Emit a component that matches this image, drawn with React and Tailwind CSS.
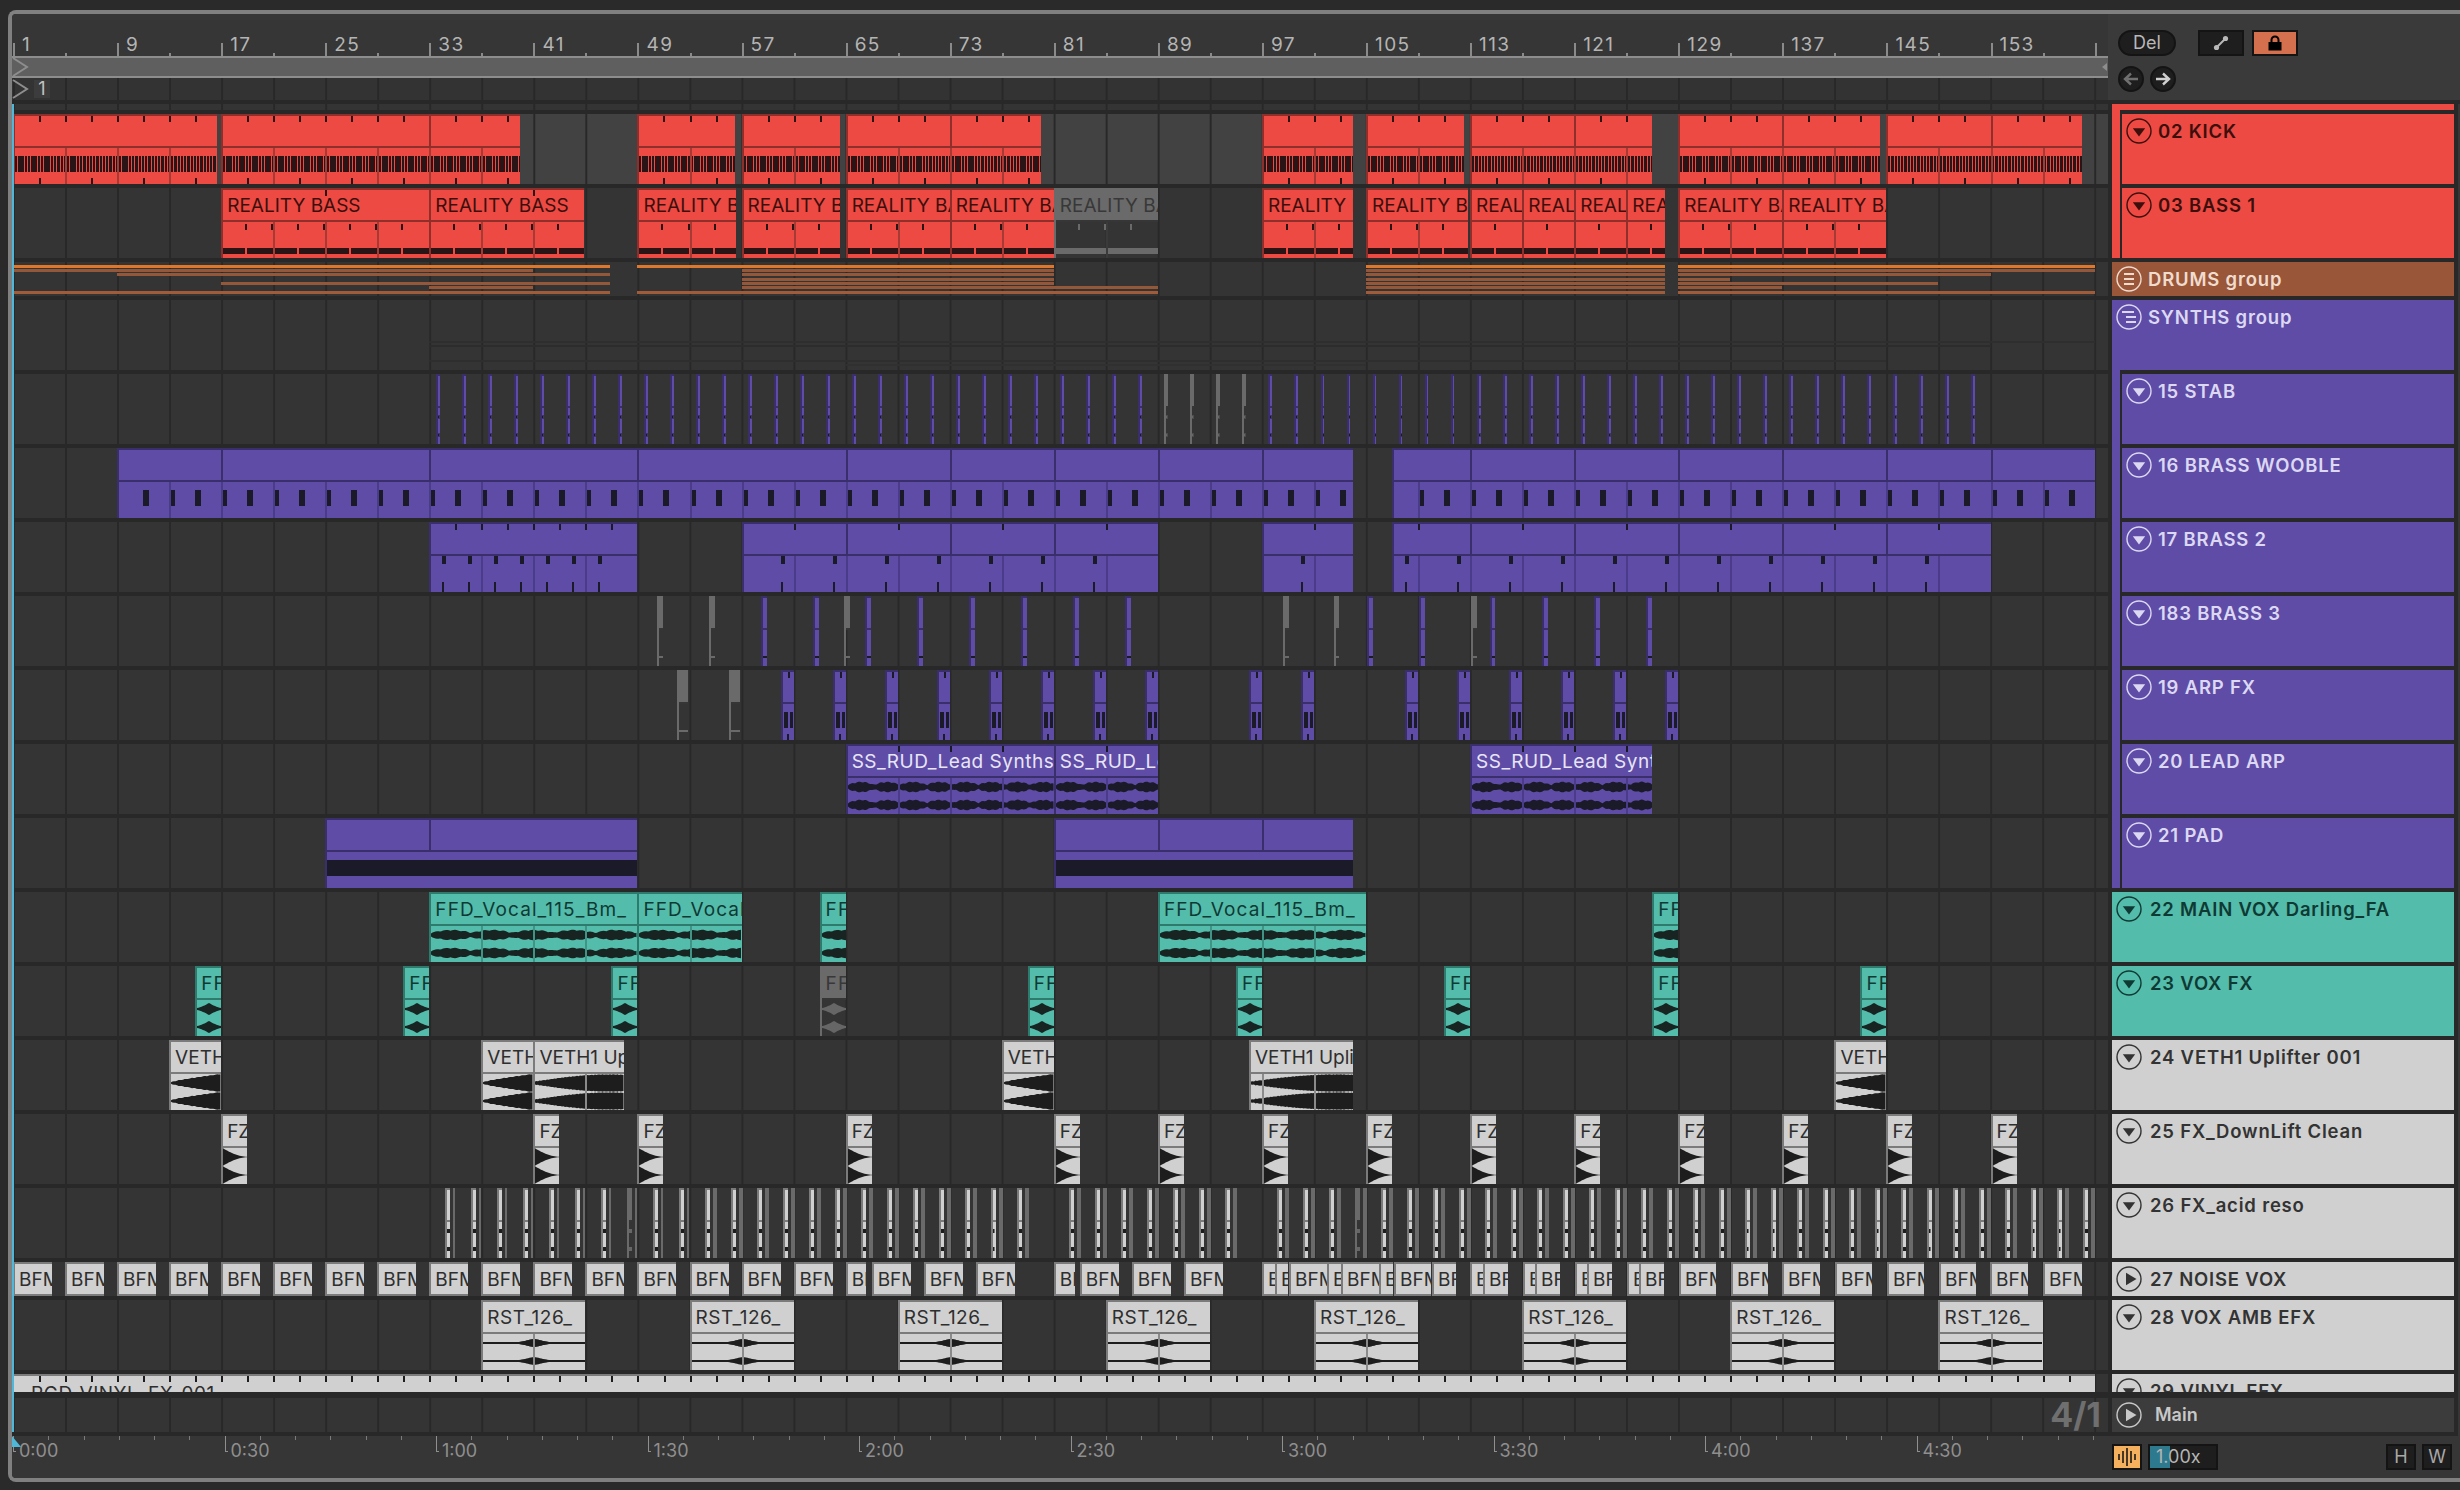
import React from "react";

const BAR = 13.01;
const barX = (b) => 1 + (b - 1) * BAR; // x inside the arrangement panel
const xBar = (x) => (x - 13) / BAR + 1; // screen x to bar

const themes = {
  red: { bg: "bg-[#ec4a42]", line: "bg-[#8e2f2b]", edge: "border-[#8e2f2b]", text: "text-[#3c0f0d]", wave: "#2a1416", tick: "bg-[#2a1416]", soft: "bg-[#a63a35]" },
  purple: { bg: "bg-[#5e4ca6]", line: "bg-[#3a2f6b]", edge: "border-[#3a2f6b]", text: "text-[#e8e5f7]", wave: "#1b1a28", tick: "bg-[#1b1a28]", soft: "bg-[#4a3c88]" },
  teal: { bg: "bg-[#54bcab]", line: "bg-[#2e7a6c]", edge: "border-[#2e7a6c]", text: "text-[#0f3a34]", wave: "#172422", tick: "bg-[#172422]", soft: "bg-[#3f9486]" },
  light: { bg: "bg-[#d0d0d0]", line: "bg-[#7b7b7b]", edge: "border-[#7b7b7b]", text: "text-[#2e2e2e]", wave: "#1d1d1d", tick: "bg-[#1d1d1d]", soft: "bg-[#8a8a8a]" },
  grey: { bg: "bg-[#6a6a6a]", line: "bg-[#363636]", edge: "border-[#6a6a6a]", text: "text-[#383838]", wave: "#666666", tick: "bg-[#6a6a6a]", soft: "bg-[#3a3a3a]" },
};

// Envelope of each kind of audio clip, x in px, w = clip width
const shapes = {
  vocal: (x) => 1.6 + 2.6 * Math.abs(Math.sin(x / 13)) + 1.1 * Math.abs(Math.sin(x / 3.1)),
  lead: (x) => 1.4 + 2.8 * Math.abs(Math.sin(x / 8.3)) + 1.2 * Math.abs(Math.sin(x / 2.3)),
  fx: (x, w) => 1 + 5 * Math.pow(1 - Math.abs((2 * x) / w - 1), 1.4),
  rise: (x, w) => 0.8 + 8.2 * Math.pow(x / w, 0.8) + 0.3 * Math.sin(x),
  riseLong: (x, w) => 1.5 + 7 * Math.sin(Math.min(1, x / w) * 1.9) + 0.3 * Math.sin(x * 1.7),
  fall: (x, w) => 8.5 * Math.pow(1 - x / w, 1.8) + 0.3,
  rst: (x, w) => 0.9 + 3 * Math.exp(-Math.pow((x - w / 2) / 9, 2)),
  rst2: (x, w) => 0.9 + 1.2 * Math.exp(-Math.pow((x - w / 2) / 10, 2)),
  thin: (x) => 1.2 + Math.abs(Math.sin(x)) * 0.8,
  acid: () => 2,
};

function Wave({ w, shape, shape2, color }) {
  const channel = (cy, fn) => {
    const pts = [];
    for (let x = 0; x <= w; x += 1.5) pts.push([x, fn(x, w)]);
    const top = pts.map(([x, a]) => `${x},${cy - a}`);
    const bottom = pts.reverse().map(([x, a]) => `${x},${cy + a}`);
    return [...top, ...bottom].join(" ");
  };
  return (
    <svg className="absolute left-0 top-0" width={w} height={36}>
      <polygon points={channel(9, shapes[shape])} fill={color} />
      <polygon points={channel(27, shapes[shape2 || shape])} fill={color} />
    </svg>
  );
}

function Ticks({ start, end, from, every, y, h, w = 2, cls, shift = 0 }) {
  const out = [];
  const offset = barX(start);
  for (let b = from; b < end; b += every) {
    if (b <= start) continue;
    out.push(
      <div
        key={b}
        className={`absolute ${cls}`}
        style={{ left: barX(b) - offset - 2 + shift, top: y, height: h, width: w }}
      />
    );
  }
  return out;
}

// Header lines are sparse in the first half of the song, then every 8 bars
const headerLine = (b) => (b < 65 ? (b - 1) % 16 === 0 : (b - 1) % 8 === 0);

function Clip({ s, e, t = "red", label, wave, n = 2, compact }) {
  const th = themes[t];
  const width = barX(e) - barX(s);
  const inner = width - 2;
  const isGrey = t === "grey";
  const tracking = label?.startsWith("FFD") ? "tracking-[1.1px]" : label?.includes("_") ? "tracking-[0.5px]" : "";
  return (
    <div
      className={`absolute top-0 h-full flex flex-col overflow-hidden border-l-2 border-t-2 ${th.edge} ${compact ? "border-b-2" : ""}`}
      style={{ left: barX(s), width }}
    >
      <div className={`relative flex items-center pl-[4px] whitespace-nowrap text-[19px] leading-none ${tracking} ${th.bg} ${th.text} ${compact ? "flex-1" : "h-[30px] pt-[1px]"}`}>
        {label}
        {wave === "kick" && <Ticks start={s} end={e} from={1} every={2} y={0} h={6} cls={th.tick} />}
        {wave === "bass" && <Ticks start={s} end={e} from={9} every={16} y={0} h={6} cls={th.tick} />}
        {wave === "brass2" && <Ticks start={s} end={e} from={1} every={n} y={0} h={6} cls={th.tick} />}
        {wave === "arp" && <div className={`absolute left-[5px] top-0 w-[2px] h-[6px] ${th.tick}`} />}
        {wave === "lead" && <Ticks start={s} end={e} from={1} every={4} y={0} h={6} cls={th.tick} />}
      </div>
      {!compact && <div className={`h-[2px] shrink-0 ${th.line}`} />}
      {!compact && (
        <div className={`relative flex-1 ${isGrey ? "" : th.bg}`}>
          {wave === "kick" && (
            <>
              <div className="absolute inset-x-0 top-[8px] h-[16px] bg-[repeating-linear-gradient(90deg,#2a1416_0_2.4px,#ec4a42_2.4px_3.25px)]" />
              <Ticks start={s} end={e} from={1} every={2} y={30} h={6} cls={th.tick} />
            </>
          )}
          {wave === "bass" && (
            <>
              <Ticks start={s} end={e} from={1} every={2} y={2} h={6} cls={isGrey ? "bg-[#6a6a6a]" : th.tick} shift={-2} />
              <div className={`absolute inset-x-0 top-[26px] h-[6px] ${isGrey ? "bg-[repeating-linear-gradient(90deg,#6a6a6a_0_50px,#363636_50px_52px)]" : "bg-[repeating-linear-gradient(90deg,#2a1416_0_22px,#ec4a42_22px_24px,#2a1416_24px_50px,#ec4a42_50px_52px)]"}`} />
            </>
          )}
          {wave === "brass" && <Ticks start={s} end={e} from={1} every={2} y={8} h={16} w={6} cls={th.tick} />}
          {wave === "brass2" && (
            <>
              <Ticks start={s} end={e} from={1} every={n} y={0} h={8} w={4} cls={th.tick} shift={-13} />
              <Ticks start={s} end={e} from={1} every={n} y={26} h={10} w={2} cls={th.tick} shift={-13} />
            </>
          )}
          {wave === "pad" && <div className={`absolute inset-x-0 top-[8px] h-[16px] ${th.tick}`} />}
          {wave === "mark" && <div className={`absolute inset-x-0 top-[26px] h-[2px] ${th.tick}`} />}
          {wave === "arp" && (
            <>
              <div className={`absolute left-[1px] right-[1px] top-[8px] h-[16px] ${th.tick}`} />
              <div className={`absolute left-[5px] top-[8px] h-[16px] w-[2px] ${th.bg}`} />
              <div className={`absolute left-[4px] top-[30px] h-[6px] w-[2px] ${th.tick}`} />
            </>
          )}
          {shapes[wave] && <Wave w={inner} shape={wave} color={th.wave} />}
          {wave === "rst" && <Wave w={inner} shape="rst" shape2="rst2" color={th.wave} />}
          {width > 40 && wave !== "pad" &&
            Array.from({ length: 41 }, (_, k) => 1 + k * 4)
              .filter((b) => b > s && b < e)
              .map((b) => (
                <div key={b} className={`absolute top-0 bottom-0 w-[2px] ${th.soft}`} style={{ left: barX(b) - barX(s) - 2 }} />
              ))}
        </div>
      )}
      {width > 40 && !compact &&
        Array.from({ length: 21 }, (_, k) => 1 + k * 8)
          .filter((b) => b > s && b < e && headerLine(b) && (t === "purple" || t === "red") && wave !== "bass" && wave !== "lead")
          .map((b) => (
            <div key={b} className={`absolute top-0 h-[30px] w-[2px] ${th.line}`} style={{ left: barX(b) - barX(s) - 2 }} />
          ))}
    </div>
  );
}

const R = "REALITY BASS";
const kick = [[1, 16.7], [17, 40], [49, 56.5], [57, 64.6], [65, 80], [97, 104], [105, 112.5], [113, 127], [129, 144.5], [145, 160]];
const bass = [[17, 33], [33, 44.9], [49, 56.6], [57, 64.6], [65, 73], [73, 81], [97, 104], [105, 112.8], [113, 117], [117, 121], [121, 125], [125, 128], [129, 137], [137, 145]];

const drumLines = [
  [3, "bg-[#dc772e]", [[1, 46.9], [49, 81], [105, 128], [129, 161]]],
  [7, "bg-[#95573a]", [[1, 41], [57, 81], [105, 128], [129, 161]]],
  [11, "bg-[#95573a]", [[9, 46.9], [57, 81], [105, 128], [129, 153]]],
  [16, "bg-[#95573a]", [[57, 81], [105, 128], [129, 133]]],
  [20, "bg-[#95573a]", [[17, 46.9], [57, 81], [105, 128], [129, 149]]],
  [24, "bg-[#95573a]", [[33, 41], [57, 89], [105, 128], [129, 137]]],
  [29, "bg-[#a05c38]", [[1, 46.9], [49, 89], [105, 128], [129, 161]]],
];

const synthLines = [
  [41, "bg-[#2e2e2e]", [[33, 161]]],
  [45, "bg-[#2c2c2c]", [[33, 153]]],
  [60, "bg-[#2e2e2e]", [[33, 145]]],
  [64, "bg-[#303030]", [[65, 105]]],
];

function Lines({ lines, h = "h-[2px]" }) {
  return lines.flatMap(([y, cls, spans]) =>
    spans.map(([s, e]) => (
      <div key={`${y}-${s}`} className={`absolute ${h} ${cls}`} style={{ top: y, left: barX(s), width: barX(e) - barX(s) }} />
    ))
  );
}

const range = (from, count, step) => Array.from({ length: count }, (_, k) => from + k * step);

const brass3Purple = [...range(58.5, 8, 4), 105.1, 109.1, ...range(114.5, 4, 4)];
const brass3Grey = [50.5, 54.5, 64.9, 98.6, 102.5, 113.1];
const arpPurple = [...range(60, 8, 4), 96, 100, ...range(108, 6, 4)];
const voxFx = [15, 31, 47, 79, 95, 111, 127, 143];
const fz = [17, 41, 49, 65, 81, 89, 97, 105, 113, 121, 129, 137, 145, 153];
const rst = [37, 53, 69, 85, 101, 117, 133, 149];

const bfmBars = [
  ...range(1, 16, 4).map((b) => [b, b + 3]),
  [65, 66.6], [67, 70], [71, 74], [75, 78], [81, 82.6], [83, 86], [87, 90], [91, 94],
];
// the busy end of the noise track is irregular, so read off as screen x
const bfmX = [
  [1262, 1275], [1275, 1288], [1289, 1327], [1327, 1341], [1341, 1379], [1379, 1393], [1394, 1431], [1432, 1456],
  [1470, 1483], [1483, 1508], [1523, 1535], [1535, 1560], [1575, 1587], [1587, 1612], [1627, 1639], [1639, 1664],
  [1679, 1716], [1731, 1768], [1782, 1820], [1835, 1872], [1887, 1924], [1939, 1976], [1990, 2028], [2043, 2082],
];
// short slices only have room for the start of the name
const bfmLabel = (px) => (px < 20 ? "B" : px < 32 ? "BF" : "BFM");

const acid = range(445, 65, 26).filter((x) => !(x > 1028 && x < 1067) && !(x > 1232 && x < 1274));

function Chevron({ className }) {
  return (
    <svg className={className} width="18" height="20" viewBox="0 0 18 20" fill="none">
      <path d="M1 1 L15 10 L1 19" stroke="#8d8d8d" strokeWidth="2" />
    </svg>
  );
}

function CircleIcon({ kind = "down" }) {
  return (
    <svg width="26" height="26" viewBox="0 0 26 26" fill="none" className="shrink-0" stroke="currentColor">
      <circle cx="13" cy="13" r="12" strokeWidth="1.4" />
      {kind === "down" && <path d="M6.8 10.2 H19.2 L13 18.5 Z" fill="currentColor" stroke="none" />}
      {kind === "right" && <path d="M10 6.8 L20.5 13 L10 19.2 Z" fill="currentColor" stroke="none" />}
      {kind === "group" && <path d="M8 8 H18 M8 13 H18 M8 18 H18" strokeWidth="2" />}
      {kind === "steps" && <path d="M6 8 H18 M10 13 H20 M10 18 H20" strokeWidth="2" />}
    </svg>
  );
}

const heads = {
  red: { bg: "bg-[#ec4a42]", text: "text-[#3c0f0d]" },
  brown: { bg: "bg-[#9a5638]", text: "text-[#efdccf]" },
  purple: { bg: "bg-[#5e4ca6]", text: "text-[#dcd8f2]" },
  teal: { bg: "bg-[#54bcab]", text: "text-[#0f3a34]" },
  light: { bg: "bg-[#d0d0d0]", text: "text-[#333333]" },
};

function Head({ tone, name, icon = "down", h = "h-[70px]", textGap = "ml-[8px]" }) {
  const c = heads[tone];
  return (
    <div className={`${h} w-full overflow-hidden ${c.bg} ${c.text}`}>
      <div className="flex items-center h-[34px] shrink-0 pl-[4px] text-[18.5px] font-semibold leading-none tracking-[0.8px] whitespace-nowrap">
        <CircleIcon kind={icon} />
        <span className={textGap}>{name}</span>
      </div>
    </div>
  );
}

function Nested({ tone, name, last }) {
  const c = heads[tone];
  return (
    <div className="flex h-full w-[342px]">
      <div className={`w-[8px] ${c.bg} ${last ? "h-[70px]" : "h-full"}`} />
      <div className="w-[2px]" />
      <div className="w-[332px]">
        <Head tone={tone} name={name} textGap="ml-[6px]" />
      </div>
    </div>
  );
}

function Row({ row = "h-[74px]", cell = "h-[70px]", bg = "bg-[#343434]", head, children }) {
  return (
    <div className={`flex ${row}`}>
      <div className={`relative w-[2096px] overflow-hidden ${cell} ${bg} bg-[linear-gradient(90deg,transparent_1px,#282828_1px,#282828_3px,transparent_3px)] bg-size-[52.04px_100%]`}>
        {children}
      </div>
      <div className="ml-[4px] w-[342px] h-full">{head}</div>
      <div className="ml-[4px] flex-1 bg-[#363636]" />
    </div>
  );
}

const rulerBars = range(1, 20, 8);
const times = ["0:00", "0:30", "1:00", "1:30", "2:00", "2:30", "3:00", "3:30", "4:00", "4:30"];

function TopRuler() {
  return (
    <div className="relative h-[42px] text-[19px] leading-none tracking-[1.4px] text-[#b4b4b4]">
      {range(1, 41, 4).map((b) => (
        <div
          key={b}
          className={`absolute bottom-0 w-[2px] bg-[#8a8a8a] ${(b - 1) % 8 === 0 ? "h-[13px]" : "h-[3px]"}`}
          style={{ left: barX(b) }}
        />
      ))}
      {rulerBars.map((b) => (
        <span key={b} className="absolute top-[21px]" style={{ left: barX(b) + 9 }}>
          {b}
        </span>
      ))}
    </div>
  );
}

function TimeRuler() {
  return (
    <div className="relative w-[2096px] h-full text-[18px] leading-none text-[#8f8f8f]">
      {range(0, 60, 35.25).map((x, i) =>
        i % 6 === 0 ? null : <div key={i} className="absolute top-0 w-px h-[4px] bg-[#7b7b7b]" style={{ left: x + 1 }} />
      )}
      {times.map((t, i) => (
        <div key={t} className="absolute top-0" style={{ left: i * 211.5 + 1 }}>
          <div className="w-[3px] h-[16px] border-l border-b border-[#8f8f8f]" />
          <span className="absolute left-[6px] top-[6px]">{t}</span>
        </div>
      ))}
      <svg className="absolute left-0 top-0" width="10" height="12">
        <path d="M0 0 L9 11 H0 Z" fill="#4fb8d8" />
      </svg>
    </div>
  );
}

export default function App() {
  return (
    <div className="w-[2460px] h-[1490px] pt-[10px] pl-[8px] bg-[#2a2a2a] overflow-hidden font-['Inter',sans-serif]">
      <div className="w-[2452px] h-[1472px] border-4 border-r-0 border-[#808080] rounded-l-[8px] bg-[#282828] flex flex-col overflow-hidden">
        {/* Ruler and scrub area */}
        <div className="flex h-[86px] mb-[4px] bg-[#363636]">
          <div className="w-[2096px]">
            <TopRuler />
            <div className="relative h-[22px] bg-[#5f5f5f] border-y-2 border-[#8d8d8d]">
              <Chevron className="absolute left-0 top-[-1px]" />
              <div className="absolute right-[1px] top-[5px] w-0 h-0 border-y-[4px] border-y-transparent border-r-[5px] border-r-[#8d8d8d]" />
            </div>
            <div className="relative h-[22px] bg-[#333333] bg-[linear-gradient(90deg,transparent_1px,#282828_1px,#282828_3px,transparent_3px)] bg-size-[52.04px_100%]">
              <Chevron className="absolute left-0 top-[1px]" />
              <span className="absolute left-[22px] top-[2px] h-[18px] w-[16px] bg-[#3c3c3c] text-center text-[18px] leading-[18px] text-[#c4c4c4]">1</span>
            </div>
          </div>
          <div className="flex-1 bg-[#3a3a3a] pl-[10px] pt-[16px]">
            <div className="flex items-center">
              <div className="flex items-center justify-center w-[58px] h-[26px] rounded-full bg-[#1e1e1e] border-2 border-[#141414] text-[18px] leading-none text-[#b8b8b8]">Del</div>
              <div className="ml-[22px] flex items-center justify-center w-[46px] h-[26px] bg-[#1e1e1e] border-2 border-[#141414]">
                <svg width="16" height="16" viewBox="0 0 16 16">
                  <path d="M3.5 12.5 L12.5 3.5" stroke="#b8b8b8" strokeWidth="2" />
                  <circle cx="3.5" cy="12.5" r="2.6" fill="#b8b8b8" />
                  <circle cx="12.5" cy="3.5" r="2.6" fill="#b8b8b8" />
                </svg>
              </div>
              <div className="ml-[8px] flex items-center justify-center w-[46px] h-[26px] bg-[#d4704e] border-2 border-[#141414]">
                <svg width="16" height="16" viewBox="0 0 16 16">
                  <path d="M4.5 7 V5 A3.5 3.5 0 0 1 11.5 5 V7" fill="none" stroke="#000" strokeWidth="2" />
                  <rect x="1.5" y="7" width="13" height="8.5" fill="#000" />
                </svg>
              </div>
            </div>
            <div className="flex gap-[6px] mt-[10px]">
              <div className="flex items-center justify-center w-[26px] h-[26px] rounded-full bg-[#1e1e1e] border-2 border-[#141414]">
                <svg width="16" height="14" viewBox="0 0 16 14">
                  <path d="M15 7 H4 M8 1.5 L2 7 L8 12.5" fill="none" stroke="#707070" strokeWidth="2.4" />
                </svg>
              </div>
              <div className="flex items-center justify-center w-[26px] h-[26px] rounded-full bg-[#1e1e1e] border-2 border-[#141414]">
                <svg width="16" height="14" viewBox="0 0 16 14">
                  <path d="M1 7 H12 M8 1.5 L14 7 L8 12.5" fill="none" stroke="#d0d0d0" strokeWidth="2.4" />
                </svg>
              </div>
            </div>
          </div>
        </div>

        {/* Tracks */}
        <div className="relative">
          <div className="absolute left-0 top-0 bottom-[4px] w-[2px] bg-[#4fb8d8] z-10" />

          <Row
            row="h-[10px]"
            cell="h-[6px]"
            head={
              <div>
                <div className="h-[6px] bg-[#ec4a42]" />
                <div className="h-[4px] w-[8px] bg-[#ec4a42]" />
              </div>
            }
          />
          <Row bg="bg-[#424242]" head={<Nested tone="red" name="02 KICK" />}>
            {kick.map(([s, e]) => <Clip key={s} s={s} e={e} wave="kick" />)}
          </Row>
          <Row head={<Nested tone="red" name="03 BASS 1" last />}>
            {bass.map(([s, e]) => <Clip key={s} s={s} e={e} wave="bass" label={R} />)}
            <Clip s={81} e={89} t="grey" wave="bass" label={R} />
          </Row>
          <Row row="h-[38px]" cell="h-[34px]" head={<Head tone="brown" name="DRUMS group" icon="group" h="h-[34px]" textGap="ml-[6px]" />}>
            <Lines lines={drumLines} h="h-[3px]" />
          </Row>
          <Row
            head={
              <div className="h-full">
                <Head tone="purple" name="SYNTHS group" icon="steps" textGap="ml-[6px]" />
                <div className="h-[4px] w-[8px] bg-[#5e4ca6]" />
              </div>
            }
          >
            <Lines lines={synthLines} />
          </Row>
          <Row head={<Nested tone="purple" name="15 STAB" />}>
            {range(33.5, 60, 2).map((b) => (
              <Clip key={b} s={b} e={b + 0.3} t={b > 89 && b < 96 ? "grey" : "purple"} wave="thin" />
            ))}
          </Row>
          <Row head={<Nested tone="purple" name="16 BRASS WOOBLE" />}>
            <Clip s={9} e={104} t="purple" wave="brass" />
            <Clip s={107} e={161} t="purple" wave="brass" />
          </Row>
          <Row head={<Nested tone="purple" name="17 BRASS 2" />}>
            <Clip s={33} e={49} t="purple" wave="brass2" n={2} />
            <Clip s={57} e={89} t="purple" wave="brass2" n={4} />
            <Clip s={97} e={104} t="purple" wave="brass2" n={4} />
            <Clip s={107} e={153} t="purple" wave="brass2" n={4} />
          </Row>
          <Row head={<Nested tone="purple" name="183 BRASS 3" />}>
            {brass3Purple.map((b) => <Clip key={b} s={b} e={b + 0.45} t="purple" wave="mark" />)}
            {brass3Grey.map((b) => <Clip key={b} s={b} e={b + 0.45} t="grey" wave="mark" />)}
          </Row>
          <Row head={<Nested tone="purple" name="19 ARP FX" />}>
            {arpPurple.map((b) => <Clip key={b} s={b} e={b + 1} t="purple" wave="arp" />)}
            {[52, 56].map((b) => <Clip key={b} s={b} e={b + 0.9} t="grey" wave="mark" />)}
          </Row>
          <Row head={<Nested tone="purple" name="20 LEAD ARP" />}>
            <Clip s={65} e={81} t="purple" label="SS_RUD_Lead Synths" wave="lead" />
            <Clip s={81} e={89} t="purple" label="SS_RUD_Lead Synths" wave="lead" />
            <Clip s={113} e={127} t="purple" label="SS_RUD_Lead Synths" wave="lead" />
          </Row>
          <Row head={<Nested tone="purple" name="21 PAD" last />}>
            <Clip s={25} e={49} t="purple" wave="pad" />
            <Clip s={81} e={104} t="purple" wave="pad" />
          </Row>
          <Row head={<Head tone="teal" name="22 MAIN VOX Darling_FA" />}>
            <Clip s={33} e={49} t="teal" label="FFD_Vocal_115_Bm_" wave="vocal" />
            <Clip s={49} e={57} t="teal" label="FFD_Vocal_115_Bm_" wave="vocal" />
            <Clip s={63} e={65} t="teal" label="FFD" wave="vocal" />
            <Clip s={89} e={105} t="teal" label="FFD_Vocal_115_Bm_" wave="vocal" />
            <Clip s={127} e={129} t="teal" label="FFD" wave="vocal" />
          </Row>
          <Row head={<Head tone="teal" name="23 VOX FX" />}>
            {voxFx.map((b) => <Clip key={b} s={b} e={b + 2} t="teal" label="FFD" wave="fx" />)}
            <Clip s={63} e={65} t="grey" label="FFD" wave="fx" />
          </Row>
          <Row head={<Head tone="light" name="24 VETH1 Uplifter 001" />}>
            <Clip s={13} e={17} t="light" label="VETH1 Uplifter" wave="rise" />
            <Clip s={37} e={41} t="light" label="VETH1 Uplifter" wave="rise" />
            <Clip s={41} e={48} t="light" label="VETH1 Uplifter" wave="riseLong" />
            <Clip s={77} e={81} t="light" label="VETH1 Uplifter" wave="rise" />
            <Clip s={96} e={104} t="light" label="VETH1 Uplifter" wave="riseLong" />
            <Clip s={141} e={145} t="light" label="VETH1 Uplifter" wave="rise" />
          </Row>
          <Row head={<Head tone="light" name="25 FX_DownLift Clean" />}>
            {fz.map((b) => <Clip key={b} s={b} e={b + 2} t="light" label="FZ" wave="fall" />)}
          </Row>
          <Row head={<Head tone="light" name="26 FX_acid reso" />}>
            {acid.map((x) => (
              <React.Fragment key={x}>
                <div
                  className="absolute top-0 h-full bg-[#6a6a6a]"
                  style={{ left: x - 12 + 8, width: x < 700 ? 2 : 4 }}
                />
                <Clip s={xBar(x)} e={xBar(x + 5)} t={x === 627 || x === 1355 ? "grey" : "light"} wave="acid" />
              </React.Fragment>
            ))}
          </Row>
          <Row row="h-[38px]" cell="h-[34px]" head={<Head tone="light" name="27 NOISE VOX" icon="right" h="h-[34px]" />}>
            {bfmBars.map(([s, e]) => <Clip key={s} s={s} e={e} t="light" label={bfmLabel((e - s) * BAR)} compact />)}
            {bfmX.map(([a, b]) => <Clip key={a} s={xBar(a)} e={xBar(b)} t="light" label={bfmLabel(b - a)} compact />)}
          </Row>
          <Row head={<Head tone="light" name="28 VOX AMB EFX" />}>
            {rst.map((b) => <Clip key={b} s={b} e={b + 8} t="light" label="RST_126_" wave="rst" />)}
          </Row>
          <Row row="h-[24px]" cell="h-[18px]" head={<Head tone="light" name="29 VINYL EFX" h="h-[18px]" />}>
            <div className="absolute left-[1px] right-[13px] top-0 h-full bg-[#d0d0d0] border-t-2 border-[#7b7b7b] overflow-hidden">
              <span className="absolute left-[18px] top-[8px] text-[19px] leading-none tracking-[0.5px] whitespace-nowrap text-[#2e2e2e]">RGD_VINYL_FX_001</span>
              {range(3, 80, 2).map((b) => (
                <div key={b} className="absolute top-0 w-[2px] h-[6px] bg-[#1d1d1d]" style={{ left: barX(b) - 1 }} />
              ))}
            </div>
          </Row>
          <Row
            row="h-[38px]"
            cell="h-[34px]"
            head={
              <div className="flex items-center h-[34px] pl-[4px] bg-[#3c3c3c] text-[#c8c8c8] text-[18px] font-semibold leading-none">
                <CircleIcon kind="right" />
                <span className="ml-[13px]">Main</span>
              </div>
            }
          >
            <span className="absolute right-[7px] top-[2px] text-[34px] leading-[30px] font-bold text-[#6f6f6f]">4/1</span>
          </Row>
        </div>

        {/* Bottom time ruler and view controls */}
        <div className="flex h-[42px] bg-[#363636]">
          <TimeRuler />
          <div className="ml-[4px] flex-1 flex items-center pr-[8px]">
            <div className="flex items-center justify-center w-[30px] h-[26px] bg-[#f5b05e] border-2 border-[#141414]">
              <svg width="20" height="18" viewBox="0 0 20 18" stroke="#1a1a1a" strokeWidth="1.6">
                <path d="M2 6 V12 M6 3 V15 M10 0 V18 M14 3 V15 M18 6 V12" />
              </svg>
            </div>
            <div className="relative ml-[6px] flex items-center w-[70px] h-[26px] bg-[#1e1e1e] border-2 border-[#141414] overflow-hidden text-[18px] leading-none text-[#b5b5b5]">
              <div className="absolute left-0 top-0 h-full w-[20px] bg-[#2d7a8f]" />
              <span className="relative pl-[6px]">1.00x</span>
            </div>
            <div className="ml-auto flex gap-[6px]">
              <div className="flex items-center justify-center w-[30px] h-[26px] bg-[#1e1e1e] border-2 border-[#141414] text-[18px] leading-none text-[#a8a8a8]">H</div>
              <div className="flex items-center justify-center w-[30px] h-[26px] bg-[#1e1e1e] border-2 border-[#141414] text-[18px] leading-none text-[#a8a8a8]">W</div>
            </div>
          </div>
        </div>
      </div>
    </div>
  );
}
